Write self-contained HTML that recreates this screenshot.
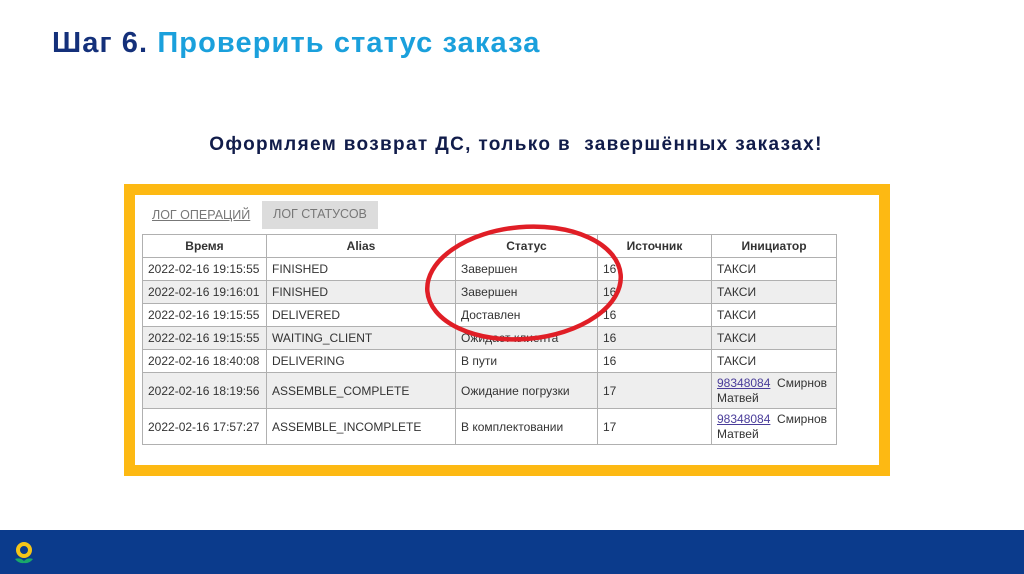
<!DOCTYPE html>
<html><head><meta charset="utf-8"><style>
body{margin:0;width:1024px;height:574px;background:#fff;position:relative;overflow:hidden;font-family:"Liberation Sans","DejaVu Sans",sans-serif}
.t{position:absolute;left:52px;top:27px;font-size:29px;letter-spacing:1.1px;font-weight:bold;color:#1aa0dc;white-space:nowrap}
.t b{color:#14307a}
.s{position:absolute;left:0;width:1032px;text-align:center;top:134px;font-size:19px;letter-spacing:1.35px;font-weight:bold;color:#111c4a}
.fr{position:absolute;left:124px;top:184px;width:744px;height:270px;border:11px solid #fdb913;background:#fff}
.tabs{position:absolute;left:142px;top:201px;height:28px;font-size:12.5px;color:#777}
.tab1{position:absolute;left:10px;top:7px;text-decoration:underline;white-space:nowrap}
.tab2{position:absolute;left:120px;top:0;width:116px;height:28px;background:#dcdcdc;line-height:26px;text-align:center;white-space:nowrap}
table{position:absolute;left:142px;top:234px;border-collapse:collapse;font-size:12px;color:#333}
td,th{border:1px solid #b0b0b0;padding:0 5px;height:22px;text-align:left;white-space:nowrap}
th{text-align:center;font-weight:bold;height:22px}
tr.g td{background:#eeeeee}
tr.h td{height:35px}
a{color:#4a3d9a;text-decoration:underline}
.bar{position:absolute;left:0;top:530px;width:1024px;height:44px;background:#0b3b8c}
</style></head><body>
<div class="t"><b>Шаг 6.</b> Проверить статус заказа</div>
<div class="s">Оформляем возврат ДС, только в&nbsp; завершённых заказах!</div>
<div class="fr"></div>
<div class="tabs"><span class="tab1">ЛОГ ОПЕРАЦИЙ</span><span class="tab2">ЛОГ СТАТУСОВ</span></div>
<table>
<colgroup><col style="width:124px"><col style="width:189px"><col style="width:142px"><col style="width:114px"><col style="width:125px"></colgroup>
<tr><th>Время</th><th>Alias</th><th>Статус</th><th>Источник</th><th>Инициатор</th></tr>
<tr><td>2022-02-16 19:15:55</td><td>FINISHED</td><td>Завершен</td><td>16</td><td>ТАКСИ</td></tr>
<tr class="g"><td>2022-02-16 19:16:01</td><td>FINISHED</td><td>Завершен</td><td>16</td><td>ТАКСИ</td></tr>
<tr><td>2022-02-16 19:15:55</td><td>DELIVERED</td><td>Доставлен</td><td>16</td><td>ТАКСИ</td></tr>
<tr class="g"><td>2022-02-16 19:15:55</td><td>WAITING_CLIENT</td><td>Ожидает клиента</td><td>16</td><td>ТАКСИ</td></tr>
<tr><td>2022-02-16 18:40:08</td><td>DELIVERING</td><td>В пути</td><td>16</td><td>ТАКСИ</td></tr>
<tr class="g h"><td>2022-02-16 18:19:56</td><td>ASSEMBLE_COMPLETE</td><td>Ожидание погрузки</td><td>17</td><td style="line-height:15px"><a>98348084</a>&nbsp; Смирнов<br>Матвей</td></tr>
<tr class="h"><td>2022-02-16 17:57:27</td><td>ASSEMBLE_INCOMPLETE</td><td>В комплектовании</td><td>17</td><td style="line-height:15px"><a>98348084</a>&nbsp; Смирнов<br>Матвей</td></tr>
</table>
<svg style="position:absolute;left:0;top:0" width="1024" height="574"><ellipse cx="524" cy="283" rx="97" ry="56" transform="rotate(-5 524 283)" fill="none" stroke="#e01e26" stroke-width="4.5"/></svg>
<div class="bar"></div>
<svg style="position:absolute;left:12px;top:540px" width="24" height="26"><circle cx="12" cy="10" r="6" fill="none" stroke="#f5c518" stroke-width="4"/><path d="M3 19 Q8 17 12 21 Q16 17 21 19 Q17 24 12 23 Q7 24 3 19Z" fill="#1aa86a"/></svg>
</body></html>
